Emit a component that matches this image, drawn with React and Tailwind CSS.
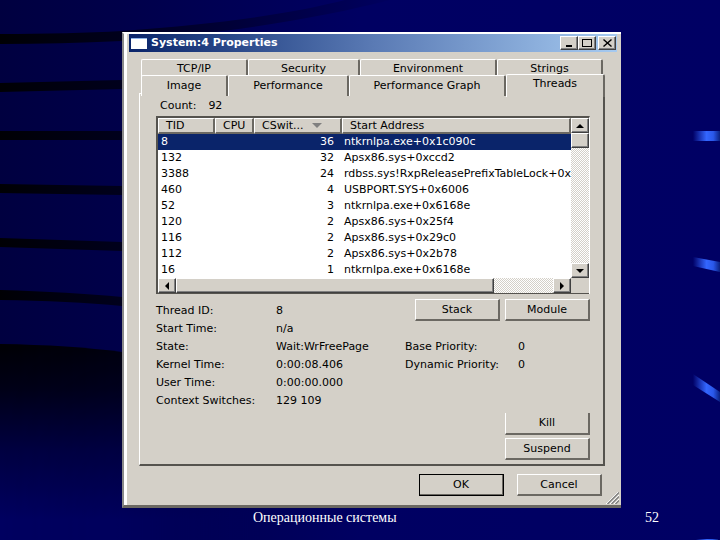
import React from "react";

const threads = [
  ["8", "36", "ntkrnlpa.exe+0x1c090c"],
  ["132", "32", "Apsx86.sys+0xccd2"],
  ["3388", "24", "rdbss.sys!RxpReleasePrefixTableLock+0x"],
  ["460", "4", "USBPORT.SYS+0x6006"],
  ["52", "3", "ntkrnlpa.exe+0x6168e"],
  ["120", "2", "Apsx86.sys+0x25f4"],
  ["116", "2", "Apsx86.sys+0x29c0"],
  ["112", "2", "Apsx86.sys+0x2b78"],
  ["16", "1", "ntkrnlpa.exe+0x6168e"],
];

const details = [
  ["Thread ID:", "8"],
  ["Start Time:", "n/a"],
  ["State:", "Wait:WrFreePage"],
  ["Kernel Time:", "0:00:08.406"],
  ["User Time:", "0:00:00.000"],
  ["Context Switches:", "129 109"],
];

const raised =
  "border-t border-l border-t-white border-l-white border-b-2 border-r-2 border-b-[#6b6862] border-r-[#6b6862] bg-[#d4d0c8]";

function Backdrop() {
  return (
    <svg
      className="absolute inset-0 h-full w-full"
      viewBox="0 0 720 540"
      preserveAspectRatio="none"
      aria-hidden="true"
    >
      <defs>
        <linearGradient id="base" x1="0" x2="1" y1="0" y2="0">
          <stop offset="0" stopColor="#000040" />
          <stop offset="0.17" stopColor="#00004a" />
          <stop offset="0.5" stopColor="#000062" />
          <stop offset="1" stopColor="#000064" />
        </linearGradient>
        <linearGradient id="shadeV" gradientUnits="userSpaceOnUse" x1="0" x2="0" y1="344" y2="520">
          <stop offset="0" stopColor="#000004" />
          <stop offset="0.25" stopColor="#000016" />
          <stop offset="0.6" stopColor="#000040" />
          <stop offset="1" stopColor="#000060" />
        </linearGradient>
        <linearGradient id="shadeFade" gradientUnits="userSpaceOnUse" x1="0" x2="260" y1="0" y2="0">
          <stop offset="0" stopColor="#fff" />
          <stop offset="0.46" stopColor="#ddd" />
          <stop offset="1" stopColor="#000" />
        </linearGradient>
        <mask id="shadeMask">
          <rect y="330" width="260" height="210" fill="url(#shadeFade)" />
        </mask>
        <linearGradient id="ray" gradientUnits="userSpaceOnUse" x1="0" x2="400" y1="0" y2="0">
          <stop offset="0" stopColor="#000004" />
          <stop offset="0.3" stopColor="#00001c" />
          <stop offset="0.7" stopColor="#000044" />
          <stop offset="1" stopColor="#000062" />
        </linearGradient>
        <linearGradient id="glow" x1="0" x2="1" y1="0" y2="0">
          <stop offset="0" stopColor="#000066" />
          <stop offset="0.5" stopColor="#3366ff" />
          <stop offset="0.75" stopColor="#2a58ea" />
          <stop offset="1" stopColor="#0a2080" />
        </linearGradient>
      </defs>
      <rect width="720" height="540" fill="url(#base)" />
      <path d="M0 344 Q70 345 122 352 L260 375 V540 H0Z" fill="url(#shadeV)" mask="url(#shadeMask)" />
      <g fill="url(#ray)">
        <path d="M0 34 Q70 34 122 31 C220 24 290 14 345 0 H390 C320 18 230 33 122 41 Q60 44 0 44Z" />
        <path d="M0 83 L122 80 V89 L0 92Z" />
        <path d="M0 131 H122 V140 H0Z" />
        <path d="M0 184 L122 186 V195 L0 193Z" />
        <path d="M0 238 L122 242 V251 L0 247Z" />
        <path d="M0 290 Q70 292 122 297 V306 Q70 301 0 300Z" />
      </g>
      <path d="M693 131 H720 V141 H693Z" fill="url(#glow)" />
      <path d="M693 257 L720 262 V272 L693 266Z" fill="url(#glow)" />
      <path d="M693 374 L720 392 V402 L693 385Z" fill="url(#glow)" />
      <path d="M696 539 H718 V540 H696Z" fill="url(#glow)" />
    </svg>
  );
}

function TitleBar() {
  const button =
    "flex h-[14px] w-[18px] items-center justify-center border border-t-white border-l-white border-r-[#404040] border-b-[#404040] bg-[#d4d0c8] shadow-[inset_-1px_-1px_0_#808080]";
  return (
    <header className="flex h-[18px] items-center bg-linear-to-r from-[#0a246a] via-[#5a7ab4] to-[#a6caf0] pr-px pl-0.5">
      <span className="h-[11px] w-4 border-t border-[#8fb4e8] bg-white" />
      <h1 className="ml-1 flex-1 text-[11px] font-bold whitespace-nowrap text-white">System:4 Properties</h1>
      <button className={button} aria-label="Minimize">
        <svg width="8" height="8" viewBox="0 0 8 8">
          <path d="M1 6h6v2H1z" />
        </svg>
      </button>
      <button className={button} aria-label="Maximize">
        <svg width="10" height="8" viewBox="0 0 10 8">
          <path d="M0 0h10v8H0z M1 1v6h8V1z" fillRule="evenodd" />
        </svg>
      </button>
      <button className={button + " ml-0.5"} aria-label="Close">
        <svg width="9" height="8" viewBox="0 0 9 8">
          <path d="M0.500 0.500L8.500 7.500M8.500 0.500L0.500 7.500" stroke="#000" strokeWidth="1.400" />
        </svg>
      </button>
    </header>
  );
}

const tab =
  "flex items-center justify-center rounded-t-[2px] border-t border-l border-r-2 border-t-white border-l-white border-r-[#6b6862] bg-[#d4d0c8] pt-px whitespace-nowrap";

function Tabs() {
  return (
    <nav role="tablist" className="pt-[7px]">
      <div className="mr-0.5 ml-0.5 grid h-4 grid-cols-[107fr_112fr_137fr_106fr]">
        {["TCP/IP", "Security", "Environment", "Strings"].map((t) => (
          <button key={t} role="tab" aria-selected="false" className={tab}>
            {t}
          </button>
        ))}
      </div>
      <div className="ml-0.5 grid h-[18px] grid-cols-[87fr_121fr_157fr_99fr]">
        {["Image", "Performance", "Performance Graph"].map((t) => (
          <button key={t} role="tab" aria-selected="false" className={tab}>
            {t}
          </button>
        ))}
        <button role="tab" aria-selected="true" className={tab + " relative -mt-px -mb-px pb-1"}>
          Threads
        </button>
      </div>
    </nav>
  );
}

function Arrow({ d }) {
  return (
    <svg width="8" height="8" viewBox="0 0 8 8" aria-hidden="true">
      <path d={d} />
    </svg>
  );
}

const dither = "bg-[repeating-conic-gradient(#ffffff_0_25%,#d4d0c8_0_50%)] bg-size-[2px_2px]";
const scrollButton =
  "flex shrink-0 items-center justify-center border border-t-white border-l-white border-r-[#404040] border-b-[#404040] bg-[#d4d0c8] shadow-[inset_-1px_-1px_0_#808080]";

function ThreadList() {
  const head =
    "h-4 border-t border-l border-t-white border-l-white border-r-2 border-r-[#6b6862] border-b-2 border-b-[#6b6862] bg-[#d4d0c8] p-0 pl-[7px] text-left font-normal leading-[13px]";
  return (
    <div className="border-t-2 border-l-2 border-r border-t-[#55534e] border-l-[#55534e] border-r-white">
      <div className="flex">
        <div className="min-w-0 flex-1 overflow-hidden bg-white">
          <table className="w-full table-fixed border-separate border-spacing-0 whitespace-nowrap">
            <colgroup>
              <col className="w-[57px]" />
              <col className="w-[39px]" />
              <col className="w-[88px]" />
              <col />
            </colgroup>
            <thead>
              <tr>
                <th className={head}>TID</th>
                <th className={head}>CPU</th>
                <th className={head}>
                  <span className="flex items-center gap-2">
                    CSwit...
                    <svg width="10" height="5" viewBox="0 0 10 5" aria-hidden="true">
                      <path d="M0 0h10L5 5z" fill="#808080" />
                    </svg>
                  </span>
                </th>
                <th className={head + " border-r-0"}>Start Address</th>
              </tr>
            </thead>
            <tbody>
              {threads.map(([tid, sw, addr], i) => (
                <tr key={tid} className={i === 0 ? "bg-[#0a246a] text-white" : ""}>
                  <td className="h-4 p-0 pl-[3px] leading-4">{tid}</td>
                  <td className="p-0" />
                  <td className="p-0 pr-2 text-right leading-4">{sw}</td>
                  <td className="p-0 pl-[2px] leading-4">{addr}</td>
                </tr>
              ))}
            </tbody>
          </table>
        </div>
        <div className={"flex w-[18px] flex-col " + dither}>
          <button className={scrollButton + " h-[15px]"} aria-label="Scroll up">
            <Arrow d="M4 2l4 4H0z" />
          </button>
          <div className={scrollButton + " h-[15px]"} />
          <div className="flex-1" />
          <button className={scrollButton + " h-[15px]"} aria-label="Scroll down">
            <Arrow d="M0 2h8L4 6z" />
          </button>
        </div>
      </div>
      <div className="flex h-4 border-b border-[#55534e] pr-[18px]">
        <div className={"flex flex-1 " + dither}>
          <button className={scrollButton + " w-[18px]"} aria-label="Scroll left">
            <Arrow d="M6 0v8L2 4z" />
          </button>
          <div className={scrollButton + " w-[77%]"} />
          <div className="flex-1" />
          <button className={scrollButton + " w-[18px]"} aria-label="Scroll right">
            <Arrow d="M2 0l4 4-4 4z" />
          </button>
        </div>
      </div>
    </div>
  );
}

function PushButton({ children, className = "" }) {
  return <button className={"h-[22px] w-[85px] pt-px " + raised + " " + className}>{children}</button>;
}

export default function App() {
  return (
    <div className="relative flex min-h-screen flex-col bg-[#000062] pt-8 font-['DejaVu_Sans',sans-serif] text-[11px] text-black">
      <Backdrop />
      <main className="relative mr-[99px] ml-[122px] border-t-2 border-b-3 border-l-2 border-t-white border-b-[#6b6862] border-l-[#8a8a8a] bg-[#d4d0c8]">
        <div className="border-l-3 border-white pr-1 pb-[9px] pl-0.5">
          <TitleBar />
          <div className="mr-3 ml-[10px]">
            <Tabs />
            <section className="border-r-2 border-b-2 border-l border-r-[#55534e] border-b-[#55534e] border-l-white bg-[linear-gradient(#fff,#fff)] bg-size-[calc(100%-99px)_1px] bg-no-repeat pr-[13px] pb-1 pl-4">
              <p className="flex h-[23px] items-center gap-3 pt-1 pl-1">
                <span>Count:</span>
                <span>92</span>
              </p>
              <ThreadList />
              <div className="flex items-start justify-between pt-[5px]">
                <dl className="grid grid-cols-[120px_129px_113px_auto] pt-[3px] leading-[18px] whitespace-nowrap">
                  {details.map(([k, v], i) => (
                    <React.Fragment key={k}>
                      <dt className="col-start-1">{k}</dt>
                      <dd>{v}</dd>
                      {i === 2 && (
                        <>
                          <dt>Base Priority:</dt>
                          <dd>0</dd>
                        </>
                      )}
                      {i === 3 && (
                        <>
                          <dt>Dynamic Priority:</dt>
                          <dd>0</dd>
                        </>
                      )}
                    </React.Fragment>
                  ))}
                </dl>
                <div className="-ml-[120px] flex gap-[5px]">
                  <PushButton>Stack</PushButton>
                  <PushButton>Module</PushButton>
                </div>
              </div>
              <div className="flex flex-col items-end gap-[3px] pt-[3px]">
                <PushButton className="border-t-0">Kill</PushButton>
                <PushButton>Suspend</PushButton>
              </div>
            </section>
            <div className="flex justify-end gap-[13px] pt-2 pr-[3px]">
              <PushButton className="outline outline-black -outline-offset-1">OK</PushButton>
              <PushButton>Cancel</PushButton>
            </div>
          </div>
        </div>
        <svg className="absolute right-0 bottom-0 mr-0.5 mb-px" width="13" height="12" viewBox="0 0 13 12" aria-hidden="true">
          <path d="M0 12L12 0M4 12L13 3M8 12L13 7" stroke="#fff" />
          <path d="M1.500 12L13 0.500M5.500 12L13 4.500M9.500 12L13 8.500" stroke="#808080" strokeWidth="1.400" />
        </svg>
      </main>
      <footer className="relative mr-[61px] ml-[253px] flex justify-between font-['Liberation_Serif',serif] text-[14px] leading-[19px] text-white">
        <span>Операционные системы</span>
        <span>52</span>
      </footer>
    </div>
  );
}
